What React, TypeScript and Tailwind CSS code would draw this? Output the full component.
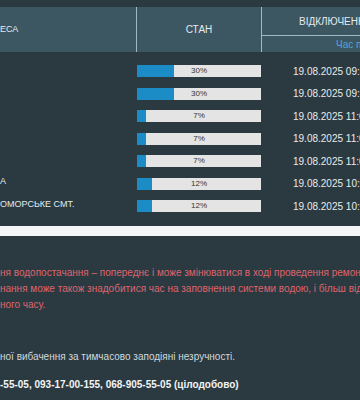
const rows = [
  { name: "", pct: 30, date: "19.08.2025 09:30" },
  { name: "", pct: 30, date: "19.08.2025 09:30" },
  { name: "", pct: 7, date: "19.08.2025 11:00" },
  { name: "", pct: 7, date: "19.08.2025 11:00" },
  { name: "", pct: 7, date: "19.08.2025 11:00" },
  { name: "А", pct: 12, date: "19.08.2025 10:00" },
  { name: "ОМОРСЬКЕ СМТ.", pct: 12, date: "19.08.2025 10:00" },
];

export default function App() {
  return (
    <div className="w-[360px] h-[400px] overflow-hidden bg-[#2b3a41] font-['Liberation_Sans',Arial,sans-serif] whitespace-nowrap">
      <div className="h-[7px]" />

      {/* Table header */}
      <div className="flex h-[45px] w-[560px] bg-[#3d5762] text-[10px] text-[#e4eaec]">
        <div className="w-[136px] flex items-center text-[9px]">ЕСА</div>
        <div className="w-px bg-[#a3b8bf]" />
        <div className="w-[124px] flex items-center justify-center">СТАН</div>
        <div className="w-px bg-[#a3b8bf]" />
        <div className="flex-1 flex flex-col">
          <div className="h-[28px] flex items-center pl-[37px]">ВІДКЛЮЧЕННЯ</div>
          <div className="h-px bg-[#a3b8bf]" />
          <div className="flex-1 flex items-center pl-[74px] text-[#4da6d8]">Час планового відновлення</div>
        </div>
      </div>

      {/* Table body */}
      <div className="pt-[8px] pb-[8px] w-[560px]">
        {rows.map((r, i) => (
          <div key={i} className="flex items-center h-[22.5px]">
            <div className="w-[137px] text-[9px] text-[#e4eaec] -mt-[4px]">{r.name}</div>
            <div className="relative w-[124px] h-[12px] bg-[#e4e4e4]">
              <div className="h-full bg-[#1b8cc6]" style={{ width: `${r.pct}%` }} />
              <span className="absolute inset-0 flex items-center justify-center text-[8px] text-[#333]">
                {r.pct}%
              </span>
            </div>
            <div className="pl-[32px] text-[10px] text-[#e8eced]">{r.date}</div>
          </div>
        ))}
      </div>
      <div className="h-[10px] bg-[#f4f6f7]" />

      {/* Notes */}
      <div className="pt-[29px] text-[10px] leading-[16px] text-[#df646d]">
        <div>ня водопостачання – попереднє і може змінюватися в ході проведення ремонтних робіт.</div>
        <div>нання може також знадобитися час на заповнення системи водою, і більш віддалених</div>
        <div>ного часу.</div>
      </div>
      <div className="pt-[36px] text-[10px] leading-[16px] text-[#cfd8dc]">
        ної вибачення за тимчасово заподіяні незручності.
      </div>
      <div className="pt-[12px] text-[10px] leading-[16px] font-bold text-[#f2f4f5]">
        -55-05, 093-17-00-155, 068-905-55-05 (цілодобово)
      </div>
    </div>
  );
}
